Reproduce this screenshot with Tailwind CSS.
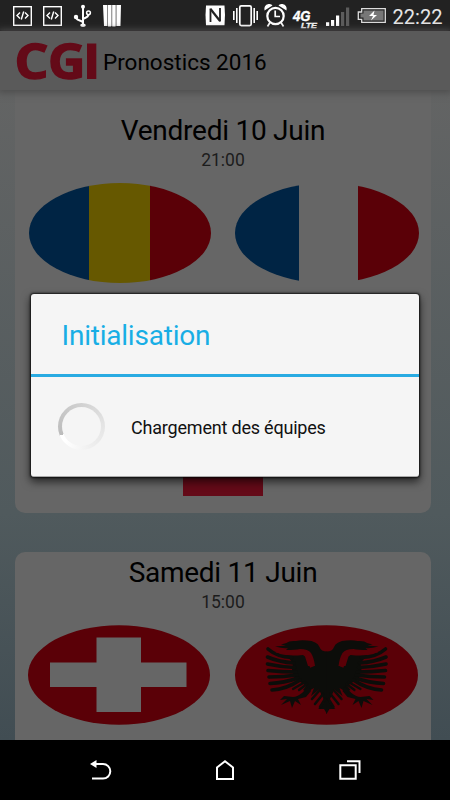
<!DOCTYPE html>
<html lang="fr">
<head>
<meta charset="utf-8">
<title>Pronostics 2016</title>
<script src="https://cdn.jsdelivr.net/npm/@tailwindcss/browser@4"></script>
</head>
<body class="relative flex h-[800px] w-[450px] flex-col overflow-hidden bg-black font-[Roboto,sans-serif] text-black">

<!-- Status bar -->
<div class="flex h-[31px] w-full shrink-0 bg-[#222] border-b border-[#1b1819]">
<svg width="450" height="30" viewBox="0 0 450 30" fill="none" stroke="#fff">
  <g stroke-width="1.4">
    <rect x="13.7" y="6.7" width="17.6" height="18.6"/>
    <path d="M20 12.5L17 15.5L20 18.5M25 12.5L28 15.5L25 18.5M23.7 11.5L21.3 19.5"/>
    <rect x="43.7" y="6.7" width="17.6" height="18.6"/>
    <path d="M50 12.5L47 15.5L50 18.5M55 12.5L58 15.5L55 18.5M53.7 11.5L51.3 19.5"/>
  </g>
  <g stroke-width="2">
    <path d="M83 7V25M76.5 17V18C76.5 21 83 20 83 23M83 19C85 17.500 88.500 18 88.500 14"/>
    <circle cx="88.500" cy="12.800" r="1.900" stroke-width="1.500"/>
    <circle cx="83" cy="6.800" r="2" fill="#fff" stroke="none"/>
    <circle cx="76" cy="17" r="2.200" fill="#fff" stroke="none"/>
    <ellipse cx="83" cy="25.300" rx="2.800" ry="1.700" fill="#fff" stroke="none"/>
  </g>
  <path fill="#888" stroke="none" d="M104 5h16.500v21H104z"/>
  <path fill="#fff" stroke="none" d="M103 5h4v21h-3zM108 5h3.200v21.500h-3.200zM112.300 5h3.200v21.500h-3.200zM116.700 5h4.300l-.7 21h-3.600z"/>
  <path fill="#fff" stroke="none" d="M206 5.500h18.500q1 9.800 0 19.700h-18.500q-1-9.800 0-19.700z"/>
  <path stroke="#222" stroke-width="1.800" d="M210.500 22V8.500M220 21.500V8"/>
  <path stroke="#222" stroke-width="2.200" d="M210.500 9L220 21"/>
  <rect x="239.800" y="5.800" width="11.400" height="19.800" rx="1.500" stroke-width="1.700"/>
  <path stroke-width="1.600" d="M236.800 8V23M233.800 11V20M254.200 8V23M257.200 11V20"/>
  <circle cx="275.500" cy="16" r="8.200" stroke-width="2.200"/>
  <path stroke-width="1.700" d="M275.200 10.500V16.500H280M270 22.500L267.500 26.500M281 22.500L283.500 26.500"/>
  <path fill="#fff" stroke="none" d="M264.500 10.500Q263.500 5 268.500 4Q271.500 3.500 272.500 5.500ZM286.500 10.500Q287.500 5 282.500 4Q279.500 3.500 278.500 5.500Z"/>
  <g fill="#fff" stroke="none" font-family="Liberation Sans, sans-serif" font-weight="700" font-style="italic">
    <text x="293" y="20.500" font-size="14" textLength="17.500" lengthAdjust="spacingAndGlyphs" stroke="#fff" stroke-width=".4">4G</text>
    <text x="301" y="27.700" font-size="7.500" textLength="16" lengthAdjust="spacingAndGlyphs" stroke="#fff" stroke-width=".3">LTE</text>
  </g>
  <path fill="#fff" stroke="none" d="M326 22.200h3.200v3.800h-3.200zM331 20h3.200v6h-3.200zM336 15.500h3.200v10.500h-3.200z"/>
  <path fill="#5c5c5c" stroke="none" d="M341 12h3.200v14h-3.200zM346 7.500h3.200v18.500h-3.200z"/>
  <path stroke="#ddd" stroke-width="1.300" d="M361.700 8.700H385.300V22.300H361.700V19.300H358.300V12H361.700Z"/>
  <path fill="#777" stroke="none" d="M363.500 10.500h20v10h-20v-3h-3v-4h3z"/>
  <path fill="#fff" stroke="none" d="M374.500 10.500L369 16H373L371 20.500L377 15H373.500Z"/>
  <text x="392.500" y="23.500" fill="#e6e6e6" stroke="none" font-family="Roboto, sans-serif" font-size="20.500" textLength="50" lengthAdjust="spacingAndGlyphs">22:22</text>
</svg>
</div>

<!-- App header -->
<header class="relative z-10 flex h-[59px] w-full shrink-0 items-center bg-[#5a5a5a] shadow-[0_1px_7px_2px_#4e4e4e]">
  <svg class="overflow-visible" width="98" height="59" viewBox="0 0 98 59" fill="#640a18" stroke="#640a18" stroke-width="1.400" font-family="Open Sans, sans-serif" font-weight="700" font-size="47.500">
    <text x="14.500" y="48" textLength="34" lengthAdjust="spacingAndGlyphs">C</text>
    <text x="48" y="48" textLength="37.500" lengthAdjust="spacingAndGlyphs">G</text>
    <rect x="87" y="12.500" width="9.300" height="35.500" stroke="none"/>
  </svg>
  <h1 class="pt-1 pl-[5px] text-[22.500px] leading-none whitespace-nowrap">Pronostics 2016</h1>
</header>

<!-- Match list -->
<main class="flex h-[650px] w-full shrink-0 flex-col gap-[39px] overflow-hidden bg-linear-to-b from-[#636464] via-[#505a5d] via-65% to-[#414d53] pr-[19px] pl-[15px]">
  <section class="flex h-[423px] shrink-0 flex-col items-center rounded-b-[10px] bg-[#666]">
    <h2 class="mt-[24px] h-[33px] text-[28px] leading-[33px] tracking-[-0.26px] whitespace-nowrap">Vendredi 10 Juin</h2>
    <p class="h-[24px] text-[17.500px] leading-[26px] text-[#1c1c1c]">21:00</p>
    <div class="mt-[12px] flex w-full justify-between pr-[12px] pl-[14px]">
      <div class="flex h-[100px] w-[182px] overflow-hidden rounded-[50%]">
        <div class="w-[60px] bg-[#002444]"></div><div class="w-[61px] bg-[#665800]"></div><div class="w-[61px] bg-[#5a0007]"></div>
      </div>
      <div class="flex h-[100px] w-[184px] justify-between overflow-hidden rounded-[50%]">
        <div class="w-[64px] bg-[#002444]"></div><div class="w-[61px] bg-[#5a0007]"></div>
      </div>
    </div>
    <div class="mt-[173px] h-[40px] w-[80px] bg-[#640a18]"></div>
  </section>
  <section class="flex h-[230px] shrink-0 flex-col items-center rounded-t-[10px] bg-[#666]">
    <h2 class="mt-[4px] h-[33px] text-[28px] leading-[33px] tracking-[-0.26px] whitespace-nowrap">Samedi 11 Juin</h2>
    <p class="h-[24px] text-[17.500px] leading-[26px] text-[#1c1c1c]">15:00</p>
    <div class="mt-[12px] flex w-full justify-between pr-[13px] pl-[13px]">
      <svg width="182" height="100" viewBox="0 0 182 100"><ellipse cx="91" cy="50" rx="91" ry="49.700" fill="#5a0007"/><path fill="#666" d="M68.500 12.500h44.500v25h45.500v24.500H113v25H68.500V62H22V37.500h46.500z"/></svg>
      <svg width="183" height="100" viewBox="235 625 183 100">
        <ellipse cx="326.500" cy="675" rx="91.500" ry="49.700" fill="#5a0007"/>
        <g id="wing">
          <path fill="#0c0d0a" d="M327 651.500Q321 651.500 319.500 647Q317 641 307 640.500Q300 640 296 641Q289 640.500 286.500 643L281 644.500L286 645.500L275 646.500Q284 649 288 648L286 650Q295 650 300 649Q308 649 311 653Q314 658 315 666H308L305 656.500L303 655Q292 656 286 655L293 663L292 670L295 679L302 683L306 686L303 690L307 692L314 688L311 696L319 689.500L324 700L327 714Z"/>
          <path fill="#0c0d0a" d="M309 686L302 693Q297 697 293 697L284 696L280 700L287 699L281 705L290 701L292 708L295 701L301 705L298 699L306 697L311 691Z"/>
          <path fill="#0c0d0a" d="M327 698L321 707L318 709L324 709L327 714Z"/>
          <g fill="none" stroke="#0c0d0a" stroke-linecap="round" stroke-width="3.600">
            <path d="M268 649Q277 657 292 657.500"/>
            <path d="M267.500 657Q279 662 294 663"/>
            <path d="M267.500 664Q281 667 295 667.500"/>
            <path d="M268 670.500Q282 672 296 672"/>
            <path d="M269 677Q284 677 297 675"/>
            <path d="M270 683.500Q284 683 298 678"/>
            <path d="M272 690Q287 689 300 680"/>
            <path d="M293 689L305 682M299 690L307 684" stroke-width="2.200"/>
            <path d="M319 691L312 699M323 694L315 704M325 699L320 707" stroke-width="2.500"/>
          </g>
          <path stroke="#5a0007" stroke-width="4" fill="none" d="M276 650.500Q290 653.500 305 652.500Q308 655 312 667"/>
        </g>
        <use href="#wing" transform="matrix(-1 0 0 1 653.500 0)"/>
      </svg>
    </div>
  </section>
</main>

<!-- Navigation bar -->
<nav class="flex h-[60px] w-full shrink-0 items-center justify-between bg-black px-[87px]">
  <svg width="26" height="26" viewBox="87 757 26 26" fill="none" stroke="#fff" stroke-width="2"><path d="M94 764H103A7.300 7.300 0 0 1 103 778.600H92"/><path fill="#fff" stroke="none" d="M90 764L96.500 760V768Z"/></svg>
  <svg width="26" height="26" viewBox="212 757 26 26" fill="none" stroke="#fff" stroke-width="2"><path d="M217 779V767.500L225 761.300L233 767.500V779Z"/></svg>
  <svg width="26" height="26" viewBox="337 757 26 26" fill="none" stroke="#fff" stroke-width="2"><path d="M340.300 765.300H355.700V778.700H340.300ZM347 761.300H359.500V773"/></svg>
</nav>

<!-- Progress dialog -->
<div role="dialog" class="absolute top-[294px] left-[31px] z-20 flex h-[183px] w-[388px] flex-col rounded-[3px] border-b border-[#aaa] bg-[#f5f5f5] shadow-[0_0_2px_1px_rgba(0,0,0,.75),0_4px_9px_1px_rgba(0,0,0,.6)]">
  <div class="flex h-[83px] items-center border-b-[3px] border-[#29abe2] pl-[30.500px]">
    <h2 class="pt-[4px] text-[28px] leading-none tracking-[-0.22px] text-[#18aee5]">Initialisation</h2>
  </div>
  <div class="flex flex-1 items-center gap-[26px] pl-[27px]">
    <div class="size-[47px] rounded-full bg-[conic-gradient(from_247deg,#bbb,#d0d0d0_30%,#e4e4e4_55%,#efefef_75%,#fff_94%,#fff)] p-[4px]"><div class="size-full rounded-full bg-[#f5f5f5]"></div></div>
    <p class="pt-[2px] text-[18px] leading-none tracking-[-0.2px] whitespace-nowrap text-[#111]">Chargement des équipes</p>
  </div>
</div>
</body>
</html>
